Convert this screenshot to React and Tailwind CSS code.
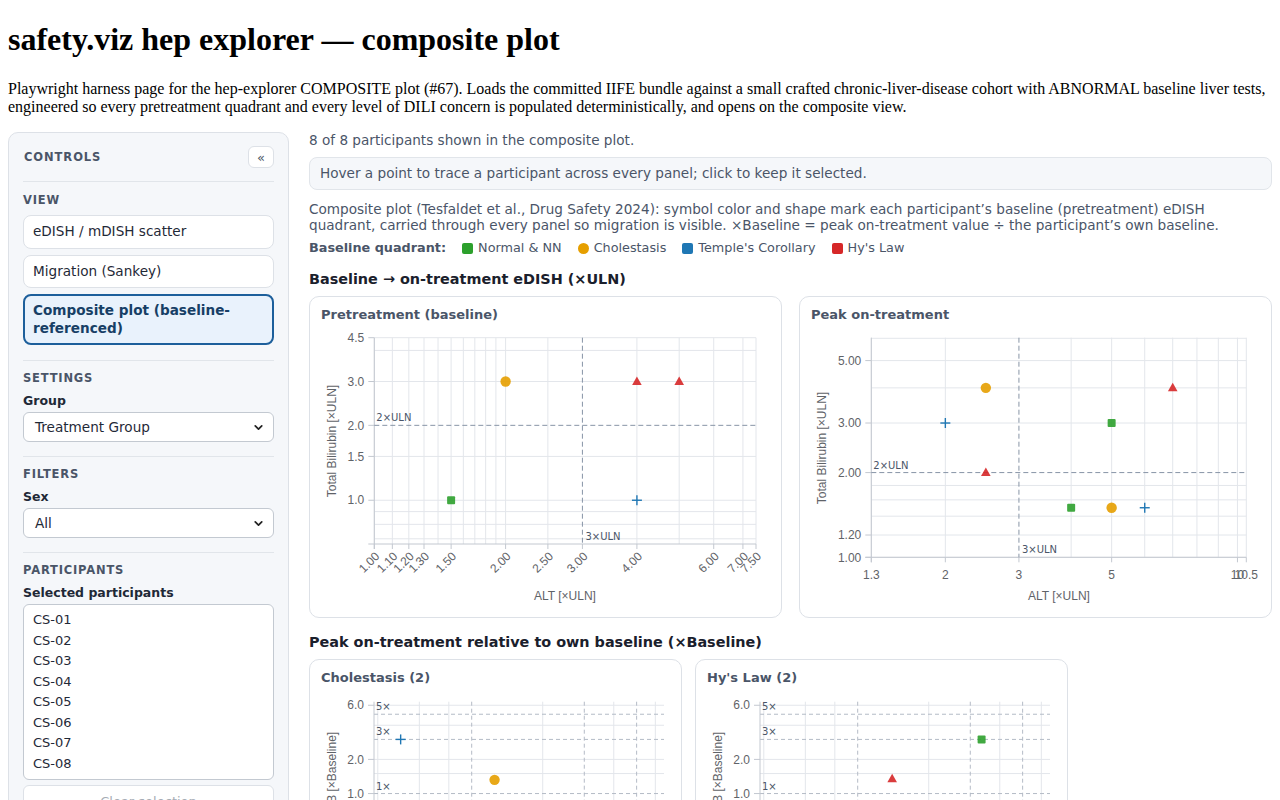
import { ChevronDown } from "lucide-react";

const COLORS = {
  normal: "#2ca02c",
  chole: "#e69f00",
  temple: "#1f77b4",
  hys: "#d62728",
};

function logScale(d0, d1, r0, r1) {
  return (v) => r0 + (Math.log(v / d0) / Math.log(d1 / d0)) * (r1 - r0);
}

function Marker({ kind, x, y }) {
  if (kind === "normal") {
    return <rect x={x - 4} y={y - 4} width={8} height={8} rx={1} fill={COLORS.normal} fillOpacity={0.9} />;
  }
  if (kind === "chole") {
    return <circle cx={x} cy={y} r={5.2} fill={COLORS.chole} fillOpacity={0.9} />;
  }
  if (kind === "hys") {
    return (
      <polygon
        points={`${x},${y - 5} ${x + 4.8},${y + 3.5} ${x - 4.8},${y + 3.5}`}
        fill={COLORS.hys}
        fillOpacity={0.9}
      />
    );
  }
  return (
    <g stroke={COLORS.temple} strokeWidth={1.4}>
      <line x1={x - 5} x2={x + 5} y1={y} y2={y} />
      <line x1={x} x2={x} y1={y - 5} y2={y + 5} />
    </g>
  );
}

const tickFont = { fontFamily: '"Liberation Sans", Arial, sans-serif', fontSize: 12, fill: "#5f6368" };
const labelFont = { fontFamily: '"DejaVu Sans", sans-serif', fontSize: 10, fill: "#4a5568" };

function Plot({
  h = 286,
  l,
  r,
  t,
  b,
  xDomain,
  yDomain,
  xGrid,
  yGrid,
  xDashed = [],
  yDashed = [],
  xTicks,
  yTicks,
  rotateX = false,
  xTitle,
  xTitleX,
  yTitle,
  yTitleY,
  thresholds = [],
  points,
}) {
  const sx = logScale(xDomain[0], xDomain[1], l, r);
  const sy = logScale(yDomain[0], yDomain[1], b, t);

  return (
    <svg width="470" height={h} className="block">
      {xGrid.map((v) => (
        <line key={`xg${v}`} x1={sx(v)} x2={sx(v)} y1={t} y2={b} stroke="#e3e6eb" />
      ))}
      {yGrid.map((v) => (
        <line key={`yg${v}`} x1={l} x2={r} y1={sy(v)} y2={sy(v)} stroke="#e3e6eb" />
      ))}
      {xDashed.map((v) => (
        <line key={`xd${v}`} x1={sx(v)} x2={sx(v)} y1={t} y2={b} stroke="#b4bbc6" strokeDasharray="4 3" />
      ))}
      {yDashed.map(([v, text]) => (
        <g key={`yd${v}`}>
          <line x1={l} x2={r} y1={sy(v)} y2={sy(v)} stroke="#b4bbc6" strokeDasharray="4 3" />
          <text x={l + 2} y={sy(v) - 4} style={labelFont}>
            {text}
          </text>
        </g>
      ))}

      <line x1={l} x2={l} y1={t} y2={b + 5} stroke="#c3c8d0" />
      <line x1={l - 6} x2={r} y1={b} y2={b} stroke="#c3c8d0" />

      {yTicks.map(([v, text]) => (
        <g key={`yt${v}`}>
          <line x1={l - 6} x2={l} y1={sy(v)} y2={sy(v)} stroke="#c3c8d0" />
          <text x={l - 10} y={sy(v)} dy="0.35em" textAnchor="end" style={tickFont}>
            {text}
          </text>
        </g>
      ))}

      {xTicks.map(([v, text]) => (
        <g key={`xt${v}`}>
          <line x1={sx(v)} x2={sx(v)} y1={b} y2={b + 5} stroke="#c3c8d0" />
          {rotateX ? (
            <text
              transform={`translate(${sx(v) + 3},${b + 10}) rotate(-45)`}
              textAnchor="end"
              dy="0.35em"
              style={tickFont}
            >
              {text}
            </text>
          ) : (
            <text x={sx(v)} y={b + 17} dy="0.35em" textAnchor="middle" style={tickFont}>
              {text}
            </text>
          )}
        </g>
      ))}

      {thresholds.map((th) =>
        th.axis === "y" ? (
          <g key={th.label}>
            <line x1={l} x2={r} y1={sy(th.v)} y2={sy(th.v)} stroke="#8794a6" strokeDasharray="5 3" />
            <text x={l + 2} y={sy(th.v) - 4} style={labelFont}>
              {th.label}
            </text>
          </g>
        ) : (
          <g key={th.label}>
            <line x1={sx(th.v)} x2={sx(th.v)} y1={t} y2={b} stroke="#8794a6" strokeDasharray="5 3" />
            <text x={sx(th.v) + 3} y={b - 4} style={labelFont}>
              {th.label}
            </text>
          </g>
        )
      )}

      {points.map(([kind, x, y], i) => (
        <Marker key={i} kind={kind} x={sx(x)} y={sy(y)} />
      ))}

      <text x={xTitleX} y={270} dy="0.35em" textAnchor="middle" style={tickFont}>
        {xTitle}
      </text>
      <text
        transform={`translate(22,${yTitleY}) rotate(-90)`}
        textAnchor="middle"
        dy="0.35em"
        style={tickFont}
      >
        {yTitle}
      </text>
    </svg>
  );
}

function PlotCard({ title, children }) {
  return (
    <div className="h-[322px] rounded-[10px] border border-[#dde1e7] bg-white pt-[10px]">
      <h3 className="mb-[3px] px-[11px] text-[13px] font-bold leading-[16px] text-[#4a5568]">{title}</h3>
      {children}
    </div>
  );
}

function SectionLabel({ children }) {
  return (
    <p className="mb-[7px] text-[11.5px] font-bold uppercase leading-[15px] tracking-[0.07em] text-[#4a5568]">
      {children}
    </p>
  );
}

function FieldLabel({ children }) {
  return <p className="mb-[3px] text-[12.5px] font-bold leading-[16px] text-[#1f2937]">{children}</p>;
}

function SelectBox({ value }) {
  return (
    <div className="flex h-[30px] items-center justify-between rounded-md border border-[#c3c9d1] bg-white pl-[11px] pr-[8px] text-[13.6px] text-[#1f2937]">
      <span>{value}</span>
      <ChevronDown size={13} strokeWidth={3.2} className="text-[#222]" />
    </div>
  );
}

const participants = ["CS-01", "CS-02", "CS-03", "CS-04", "CS-05", "CS-06", "CS-07", "CS-08"];

const legend = [
  { label: "Normal & NN", color: COLORS.normal, round: false },
  { label: "Cholestasis", color: COLORS.chole, round: true },
  { label: "Temple's Corollary", color: COLORS.temple, round: false },
  { label: "Hy's Law", color: COLORS.hys, round: false },
];

const relTicks = [
  [0.2, "0.2"],
  [0.5, "0.5"],
  [1, "1.0"],
  [2, "2.0"],
  [6, "6.0"],
];

function RelativePlot({ points }) {
  return (
    <Plot
      l={64}
      r={354}
      t={12.7}
      b={218}
      xDomain={[0.3855, 6.53]}
      yDomain={[0.1, 6.45]}
      xGrid={[0.4, 0.6, 0.8, 2, 4, 6]}
      yGrid={[0.2, 0.4, 0.6, 0.8, 1.5, 2, 4, 6]}
      xDashed={[1, 3, 5]}
      yDashed={[
        [1, "1×"],
        [3, "3×"],
        [5, "5×"],
      ]}
      xTicks={[
        [0.5, "0.5"],
        [1, "1"],
        [2, "2"],
        [5, "5"],
      ]}
      yTicks={relTicks}
      xTitle="ALT [×Baseline]"
      xTitleX={209}
      yTitle="TB [×Baseline]"
      yTitleY={82}
      points={points}
    />
  );
}

const navButton =
  "rounded-lg border border-[#dde1e7] bg-white px-[9px] py-[7px] text-left text-[13.6px] leading-[17.5px] text-[#1f2937]";

export default function App() {
  return (
    <div className="min-h-screen bg-white p-2 text-[#1f2937]">
      <h1 className="mt-[13.44px] mb-[21.44px] font-['Liberation_Serif',serif] text-[32px] font-bold leading-[36.8px] text-black">
        safety.viz hep explorer — composite plot
      </h1>
      <p className="mb-4 font-['Liberation_Serif',serif] text-[16px] leading-[18.4px] text-black">
        Playwright harness page for the hep-explorer COMPOSITE plot (#67). Loads the committed IIFE bundle against a
        small crafted chronic-liver-disease cohort with ABNORMAL baseline liver tests, engineered so every
        pretreatment quadrant and every level of DILI concern is populated deterministically, and opens on the
        composite view.
      </p>

      <div className="flex items-start gap-5 font-['DejaVu_Sans',sans-serif]">
        <aside className="w-[281px] shrink-0 rounded-[10px] border border-[#dde1e7] bg-[#f5f7fa] px-[14px] pt-[13px] pb-[14px]">
          <div className="flex items-center justify-between border-b border-[#e1e5ea] pb-[13px]">
            <span className="pl-px text-[11.5px] font-bold uppercase tracking-[0.08em] text-[#4a5568]">Controls</span>
            <button
              type="button"
              className="flex h-[22px] w-[26px] items-center justify-center rounded-md border border-[#dde1e7] bg-white text-[13px] leading-none text-[#4a5568]"
            >
              «
            </button>
          </div>

          <div className="pt-[11px]">
            <SectionLabel>View</SectionLabel>
            <div className="flex flex-col gap-[6px]">
              <button type="button" className={navButton}>
                eDISH / mDISH scatter
              </button>
              <button type="button" className={navButton}>
                Migration (Sankey)
              </button>
              <button
                type="button"
                className="rounded-lg border-2 border-[#1d5f9b] bg-[#e9f2fc] px-[8px] py-[6px] text-left text-[13.6px] font-bold leading-[17.5px] text-[#173f66]"
              >
                Composite plot (baseline-referenced)
              </button>
            </div>
          </div>

          <div className="mt-[15px] border-t border-[#e1e5ea] pt-[10px]">
            <SectionLabel>Settings</SectionLabel>
            <FieldLabel>Group</FieldLabel>
            <SelectBox value="Treatment Group" />
          </div>

          <div className="mt-[14px] border-t border-[#e1e5ea] pt-[10px]">
            <SectionLabel>Filters</SectionLabel>
            <FieldLabel>Sex</FieldLabel>
            <SelectBox value="All" />
          </div>

          <div className="mt-[14px] border-t border-[#e1e5ea] pt-[10px]">
            <SectionLabel>Participants</SectionLabel>
            <FieldLabel>Selected participants</FieldLabel>
            <div className="rounded-md border border-[#c3c9d1] bg-white px-[9px] py-[5px]">
              {participants.map((id) => (
                <div key={id} className="text-[13px] leading-[20.5px] text-[#1f2937]">
                  {id}
                </div>
              ))}
            </div>
            <button
              type="button"
              disabled
              className="mt-[5px] w-full rounded-md border border-[#dde1e7] bg-white py-[7px] text-[13px] leading-[18px] text-[#a7adb5]"
            >
              Clear selection
            </button>
          </div>
        </aside>

        <main className="min-w-0 flex-1">
          <p className="text-[13.6px] leading-[17.5px] text-[#4a5568]">
            8 of 8 participants shown in the composite plot.
          </p>
          <div className="mt-[7px] rounded-lg border border-[#e1e5ea] bg-[#f5f7fa] px-[10px] py-[7px] text-[13.6px] leading-[17.5px] text-[#4a5568]">
            Hover a point to trace a participant across every panel; click to keep it selected.
          </div>
          <p className="mt-[11px] text-[13.6px] leading-[16px] text-[#4a5568]">
            Composite plot (Tesfaldet et al., Drug Safety 2024): symbol color and shape mark each participant’s
            baseline (pretreatment) eDISH quadrant, carried through every panel so migration is visible. ×Baseline =
            peak on-treatment value ÷ the participant’s own baseline.
          </p>
          <div className="mt-[7px] flex items-center gap-4 text-[12.8px] leading-[16px] text-[#4a5568]">
            <span className="font-bold">Baseline quadrant:</span>
            {legend.map((item) => (
              <span key={item.label} className="flex items-center gap-[5px]">
                <span
                  className={item.round ? "h-[11px] w-[11px] rounded-full" : "h-[11px] w-[11px] rounded-[2px]"}
                  style={{ backgroundColor: item.color }}
                />
                {item.label}
              </span>
            ))}
          </div>

          <h2 className="mt-[14px] mb-[7px] text-[14.4px] font-bold leading-[19px] text-[#1a202c]">
            Baseline → on-treatment eDISH (×ULN)
          </h2>
          <div className="grid grid-cols-2 gap-[17px]">
            <PlotCard title="Pretreatment (baseline)">
              <Plot
                l={64.3}
                r={446}
                t={11.7}
                b={218}
                xDomain={[1, 7.5]}
                yDomain={[0.667, 4.5]}
                xGrid={[1, 1.1, 1.2, 1.3, 1.4, 1.5, 1.6, 1.7, 1.8, 1.9, 2, 2.5, 4, 5, 6, 7, 7.5]}
                yGrid={[0.7, 0.8, 0.9, 1, 1.5, 3, 4, 4.5]}
                xTicks={[1, 1.1, 1.2, 1.3, 1.5, 2, 2.5, 3, 4, 6, 7, 7.5].map((v) => [v, v.toFixed(2)])}
                yTicks={[1, 1.5, 2, 3, 4.5].map((v) => [v, v.toFixed(1)])}
                rotateX
                xTitle="ALT [×ULN]"
                xTitleX={255}
                yTitle="Total Bilirubin [×ULN]"
                yTitleY={115}
                thresholds={[
                  { axis: "y", v: 2, label: "2×ULN" },
                  { axis: "x", v: 3, label: "3×ULN" },
                ]}
                points={[
                  ["normal", 1.5, 1],
                  ["chole", 2, 3],
                  ["hys", 4, 3],
                  ["hys", 5, 3],
                  ["temple", 4, 1],
                ]}
              />
            </PlotCard>
            <PlotCard title="Peak on-treatment">
              <Plot
                l={71.3}
                r={446.3}
                t={11.7}
                b={231.3}
                xDomain={[1.33, 10.5]}
                yDomain={[1, 6.03]}
                xGrid={[1.33, 2, 4, 5, 6, 7, 8, 9, 10, 10.5]}
                yGrid={[1, 1.2, 1.4, 1.6, 1.8, 3, 4, 5, 6]}
                xTicks={[
                  [1.33, "1.3"],
                  [2, "2"],
                  [3, "3"],
                  [5, "5"],
                  [10, "10"],
                  [10.5, "10.5"],
                ]}
                yTicks={[1, 1.2, 2, 3, 5].map((v) => [v, v.toFixed(2)])}
                xTitle="ALT [×ULN]"
                xTitleX={259}
                yTitle="Total Bilirubin [×ULN]"
                yTitleY={122}
                thresholds={[
                  { axis: "y", v: 2, label: "2×ULN" },
                  { axis: "x", v: 3, label: "3×ULN" },
                ]}
                points={[
                  ["chole", 2.5, 4],
                  ["hys", 7, 4],
                  ["temple", 2, 3],
                  ["normal", 5, 3],
                  ["hys", 2.5, 2],
                  ["normal", 4, 1.5],
                  ["chole", 5, 1.5],
                  ["temple", 6, 1.5],
                ]}
              />
            </PlotCard>
          </div>

          <h2 className="mt-[15px] mb-[7px] text-[14.4px] font-bold leading-[19px] text-[#1a202c]">
            Peak on-treatment relative to own baseline (×Baseline)
          </h2>
          <div className="flex flex-wrap gap-[13px]">
            <div className="w-[373px]">
              <PlotCard title="Cholestasis (2)">
                <RelativePlot
                  points={[
                    ["temple", 0.5, 3],
                    ["chole", 1.25, 1.32],
                  ]}
                />
              </PlotCard>
            </div>
            <div className="w-[373px]">
              <PlotCard title="Hy's Law (2)">
                <RelativePlot
                  points={[
                    ["hys", 1.4, 1.35],
                    ["normal", 3.35, 3],
                  ]}
                />
              </PlotCard>
            </div>
          </div>
        </main>
      </div>
    </div>
  );
}
